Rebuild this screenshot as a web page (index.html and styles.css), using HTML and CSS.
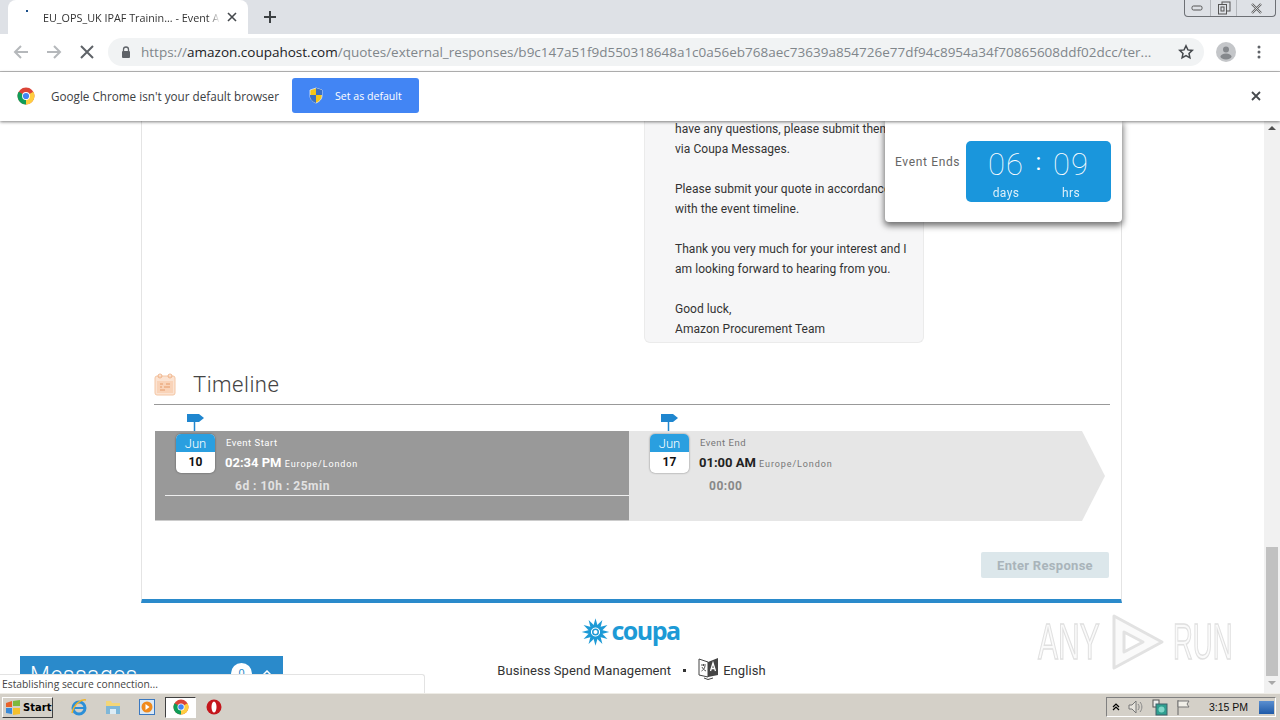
FILE: index.html
```html
<!DOCTYPE html>
<html>
  <head>
    <title>EU_OPS_UK IPAF Training - Event</title>
    <link rel="stylesheet" href="styles.css">
  </head>
  <body>
    <!-- browser chrome -->
    <div class="tabstrip">
      <div class="tab">
        <span class="tab-dot"></span>
        <span class="tab-title">EU_OPS_UK IPAF Trainin... - Event A</span>
        <svg class="tab-close" width="10" height="10" viewBox="0 0 10 10"><path d="M1 1l8 8M9 1l-8 8" stroke="#45494d" stroke-width="1.6"/></svg>
      </div>
      <svg class="new-tab" width="12" height="12" viewBox="0 0 12 12"><path d="M6 0v12M0 6h12" stroke="#3c4043" stroke-width="2"/></svg>
      <div class="window-btns">
        <span class="win-btn"><svg width="13" height="8" viewBox="0 0 13 8"><rect x="1" y="2" width="10" height="4" rx="1.5" fill="none" stroke="#555"/></svg></span>
        <span class="win-btn"><svg width="14" height="14" viewBox="0 0 14 14"><rect x="5" y="1" width="8" height="9" fill="none" stroke="#555"/><rect x="1.500" y="3.500" width="8" height="9.500" fill="#dee1e6" stroke="#555"/><rect x="4" y="6" width="3" height="4" fill="none" stroke="#555"/></svg></span>
        <span class="win-btn win-close"><svg width="13" height="11" viewBox="0 0 13 11"><path d="M2 1l9 9M11 1l-9 9" stroke="#666" stroke-width="2.400" fill="none"/><path d="M2 1l9 9M11 1l-9 9" stroke="#dee1e6" stroke-width=".8" fill="none"/></svg></span>
      </div>
    </div>

    <div class="toolbar">
      <svg class="tool-icon" width="16" height="16" viewBox="0 0 16 16"><path d="M15 8H2M8 2L2 8l6 6" fill="none" stroke="#b5b8bb" stroke-width="2"/></svg>
      <svg class="tool-icon" width="16" height="16" viewBox="0 0 16 16"><path d="M1 8h13M8 2l6 6-6 6" fill="none" stroke="#b5b8bb" stroke-width="2"/></svg>
      <svg class="tool-icon" width="16" height="16" viewBox="0 0 16 16"><path d="M2 2l12 12M14 2L2 14" stroke="#5f6368" stroke-width="2"/></svg>
      <div class="omnibox">
        <svg class="lock" width="10" height="12" viewBox="0 0 10 12"><path d="M2.500 5V3.500a2.500 2.500 0 0 1 5 0V5" fill="none" stroke="#5f6368" stroke-width="1.300"/><rect x="1" y="5" width="8" height="7" rx="1" fill="#5f6368"/></svg>
        <span class="url"><span class="url-scheme">https://</span><span class="url-host">amazon.coupahost.com</span>/quotes/external_responses/b9c147a51f9d550318648a1c0a56eb768aec73639a854726e77df94c8954a34f70865608ddf02dcc/ter...</span>
        <svg class="star" width="16" height="16" viewBox="0 0 16 16"><path d="M8 1.800l1.900 4.100 4.400.5-3.300 3 .9 4.400L8 11.600l-3.900 2.200.9-4.400-3.300-3 4.400-.5z" fill="none" stroke="#45494d" stroke-width="1.500"/></svg>
      </div>
      <svg class="avatar" width="20" height="20" viewBox="0 0 20 20"><circle cx="10" cy="10" r="10" fill="#c4c6c9"/><circle cx="10" cy="7.500" r="3" fill="#85888c"/><ellipse cx="10" cy="14.500" rx="5.500" ry="3" fill="#85888c"/></svg>
      <svg class="menu-dots" width="4" height="14" viewBox="0 0 4 14"><circle cx="2" cy="2" r="1.500" fill="#5f6368"/><circle cx="2" cy="7" r="1.500" fill="#5f6368"/><circle cx="2" cy="12" r="1.500" fill="#5f6368"/></svg>
    </div>

    <div class="infobar">
      <svg class="chrome-logo" width="18" height="18" viewBox="0 0 32 32"><circle cx="16" cy="16" r="15" fill="#db4437"/><path d="M16 16L3 8.500A15 15 0 0 0 16 31z" fill="#0f9d58"/><path d="M16 16l13-7.500A15 15 0 0 1 16 31z" fill="#ffcd40"/><circle cx="16" cy="16" r="7" fill="#fff"/><circle cx="16" cy="16" r="5.500" fill="#4285f4"/></svg>
      <span class="infobar-text">Google Chrome isn't your default browser</span>
      <button class="default-btn">
        <svg width="16" height="17" viewBox="0 0 16 17"><path d="M8 1l6 2v6c0 3-3 6-6 7-3-1-6-4-6-7V3z" fill="#f5c518" stroke="#dfe8f5" stroke-width=".8"/><path d="M8 1l6 2v5H8zM2 8h6v8C5 15 2 12 2 9z" fill="#3a6fc4"/></svg>
        Set as default
      </button>
      <svg class="infobar-close" width="10" height="10" viewBox="0 0 10 10"><path d="M1 1l8 8M9 1l-8 8" stroke="#45494d" stroke-width="1.800"/></svg>
    </div>

    <!-- page -->
    <div class="viewport">
      <div class="page">
        <div class="card">
          <div class="message">
            have any questions, please submit them<br>
            via Coupa Messages.<br>
            <br>
            Please submit your quote in accordance<br>
            with the event timeline.<br>
            <br>
            Thank you very much for your interest and I<br>
            am looking forward to hearing from you.<br>
            <br>
            Good luck,<br>
            Amazon Procurement Team
          </div>

          <div class="section-head">
            <svg width="22" height="23" viewBox="0 0 22 23"><rect x="1" y="3" width="20" height="19" rx="2" fill="#fbe3d2" stroke="#f4c6a4"/><rect x="3" y="8" width="16" height="12" fill="#f9d3b8"/><circle cx="6" cy="3" r="2" fill="none" stroke="#f0b48a"/><circle cx="16" cy="3" r="2" fill="none" stroke="#f0b48a"/><path d="M6 11h3M12 11h4M6 14h2M10 14h6M6 17h5" stroke="#e59a68"/></svg>
            <h2>Timeline</h2>
          </div>

          <div class="timeline">
            <div class="segment segment-past">
              <svg class="flag" width="17" height="19" viewBox="0 0 17 19"><path d="M0 2h12l5 4-5 4H0z" fill="#1f86cf"/><path d="M7.500 9v10" stroke="#1f86cf" stroke-width="1.500"/></svg>
              <div class="date-badge">
                <div class="date-month">Jun</div>
                <div class="date-day">10</div>
              </div>
              <div class="event-info">
                <div class="event-label">Event Start</div>
                <div class="event-time">02:34 PM <span class="event-zone">Europe/London</span></div>
                <div class="event-left">6d : 10h : 25min</div>
              </div>
              <div class="progress-line"></div>
            </div>
            <div class="segment segment-future">
              <svg class="flag" width="17" height="19" viewBox="0 0 17 19"><path d="M0 2h12l5 4-5 4H0z" fill="#1f86cf"/><path d="M7.500 9v10" stroke="#1f86cf" stroke-width="1.500"/></svg>
              <div class="date-badge">
                <div class="date-month">Jun</div>
                <div class="date-day">17</div>
              </div>
              <div class="event-info">
                <div class="event-label">Event End</div>
                <div class="event-time">01:00 AM <span class="event-zone">Europe/London</span></div>
                <div class="event-left">00:00</div>
              </div>
            </div>
          </div>

          <div class="actions">
            <button class="enter-btn">Enter Response</button>
          </div>
        </div>

        <div class="footer">
          <div class="coupa-logo">
            <svg width="29" height="28" viewBox="-14 -14 28 28">
              <circle r="3.500" fill="#1d9ad6"/>
              <g fill="#1d9ad6">
                <path d="M-2.600-4.500L0-13.800 2.600-4.500z"/>
                <path d="M-2.600-4.500L0-13.800 2.600-4.500z" transform="rotate(30)"/>
                <path d="M-2.600-4.500L0-13.800 2.600-4.500z" transform="rotate(60)"/>
                <path d="M-2.600-4.500L0-13.800 2.600-4.500z" transform="rotate(90)"/>
                <path d="M-2.600-4.500L0-13.800 2.600-4.500z" transform="rotate(120)"/>
                <path d="M-2.600-4.500L0-13.800 2.600-4.500z" transform="rotate(150)"/>
                <path d="M-2.600-4.500L0-13.800 2.600-4.500z" transform="rotate(180)"/>
                <path d="M-2.600-4.500L0-13.800 2.600-4.500z" transform="rotate(210)"/>
                <path d="M-2.600-4.500L0-13.800 2.600-4.500z" transform="rotate(240)"/>
                <path d="M-2.600-4.500L0-13.800 2.600-4.500z" transform="rotate(270)"/>
                <path d="M-2.600-4.500L0-13.800 2.600-4.500z" transform="rotate(300)"/>
                <path d="M-2.600-4.500L0-13.800 2.600-4.500z" transform="rotate(330)"/>
              </g>
              <circle r="2" fill="#fff"/>
            </svg>
            <span class="coupa-word">coupa</span>
          </div>
          <div class="footer-line">
            <span>Business Spend Management</span>
            <span class="footer-dot"></span>
            <svg width="21" height="24" viewBox="0 0 21 24"><path d="M1 3l9 3v15l-9-2z" fill="#fff" stroke="#444"/><path d="M10 6l10-4v17l-10 2z" fill="#444"/><path d="M3 9h5M5.500 8v2M7 10c-.5 3-2 4-3.500 5M4 11c1 2 2 3 4 4" fill="none" stroke="#444" stroke-width=".9"/><path d="M12.500 15l2.500-8 2.500 8M13.500 12.500h3" fill="none" stroke="#fff" stroke-width="1.300"/><path d="M6 22l4 1.500 5-1.500" fill="none" stroke="#444"/></svg>
            <span>English</span>
          </div>
        </div>
      </div>

      <div class="scrollbar">
        <svg width="16" height="17" viewBox="0 0 16 17"><path d="M4 9l4-4 4 4z" fill="#505050"/></svg>
        <div class="scroll-track"><div class="scroll-thumb"></div></div>
        <svg width="16" height="17" viewBox="0 0 16 17"><path d="M4 5l4 4 4-4z" fill="#a8a8a8"/></svg>
      </div>

      <!-- things floating over the page -->
      <div class="countdown">
        <span class="countdown-label">Event Ends</span>
        <div class="countdown-box">
          <div class="count-col"><span class="count-num">06</span><span class="count-unit">days</span></div>
          <div class="count-sep">:</div>
          <div class="count-col"><span class="count-num">09</span><span class="count-unit">hrs</span></div>
        </div>
      </div>

      <div class="messages-widget">
        <span class="messages-title">Messages</span>
        <span class="messages-count">0</span>
        <svg class="messages-arrow" width="10" height="6" viewBox="0 0 10 6"><path d="M1 5l4-4 4 4" fill="none" stroke="#fff" stroke-width="1.500"/></svg>
      </div>

      <div class="status-bubble">Establishing secure connection...</div>

      <div class="watermark">
        <span class="wm-any">ANY</span>
        <svg width="58" height="60" viewBox="0 0 58 60"><path d="M6 4l48 26L6 56z M16 20v20l19-10z" fill="#fafafa" stroke="#e2e2e2" stroke-width="3" stroke-linejoin="round"/></svg>
        <span class="wm-run">RUN</span>
      </div>
    </div>

    <!-- windows taskbar -->
    <div class="taskbar">
      <button class="start-btn">
        <svg width="16" height="15" viewBox="0 0 16 15"><path d="M1 3l6-2v6H1z" fill="#e8622a"/><path d="M8 1l7-1v6H8z" fill="#7cb83c"/><path d="M1 8h6v6l-6-1z" fill="#3a8ad8"/><path d="M8 8h7v6l-7 1z" fill="#f5c02c"/></svg>
        Start
      </button>
      <div class="quick-launch">
        <span class="task-item">
          <svg width="18" height="18" viewBox="0 0 18 18"><circle cx="9" cy="10" r="6" fill="none" stroke="#2b8fd8" stroke-width="3"/><path d="M4 10h10" stroke="#2b8fd8" stroke-width="2"/><path d="M2 15C4 6 11 1 16 2" fill="none" stroke="#f0b429" stroke-width="1.500"/></svg>
        </span>
        <span class="task-item">
          <svg width="16" height="16" viewBox="0 0 16 16"><path d="M1 2h5l1 2h8v11H1z" fill="#f3d679"/><path d="M1 7h14v8H1z" fill="#7fb7d8"/><path d="M5 15v-5h6v5" fill="#dcecf5"/></svg>
        </span>
        <span class="task-item">
          <svg width="16" height="16" viewBox="0 0 16 16"><rect x=".5" y=".5" width="15" height="15" fill="#dbe9f6" stroke="#3a78c0"/><circle cx="8" cy="8" r="5.500" fill="#f08a1c"/><path d="M6.500 5l4 3-4 3z" fill="#fff"/></svg>
        </span>
        <span class="task-item task-active">
          <svg width="16" height="16" viewBox="0 0 32 32"><circle cx="16" cy="16" r="15" fill="#db4437"/><path d="M16 16L3 8.500A15 15 0 0 0 16 31z" fill="#0f9d58"/><path d="M16 16l13-7.500A15 15 0 0 1 16 31z" fill="#ffcd40"/><circle cx="16" cy="16" r="7" fill="#fff"/><circle cx="16" cy="16" r="5.500" fill="#4285f4"/></svg>
        </span>
        <span class="task-item">
          <svg width="16" height="16" viewBox="0 0 16 16"><circle cx="8" cy="8" r="7.500" fill="#c4161c"/><ellipse cx="8" cy="8" rx="2.500" ry="5.500" fill="#fff"/></svg>
        </span>
      </div>
      <div class="tray">
        <svg width="8" height="8" viewBox="0 0 8 8"><path d="M1 4l3-3 3 3M1 7l3-3 3 3" fill="none" stroke="#000" stroke-width="1.200"/></svg>
        <svg width="16" height="16" viewBox="0 0 16 16"><path d="M1 6h3l4-4v12l-4-4H1z" fill="#e6e3dc" stroke="#777"/><path d="M10 5c1.500 2 1.500 4 0 6M12 3c2.500 3 2.500 7 0 10" fill="none" stroke="#888"/></svg>
        <svg width="16" height="17" viewBox="0 0 16 17"><rect x="1" y="1" width="6" height="7" fill="#eee" stroke="#555"/><rect x="4" y="5" width="11" height="11" fill="#2f9f90" stroke="#40606a"/><circle cx="9.500" cy="10.500" r="3" fill="#7fd6c8"/></svg>
        <svg width="15" height="16" viewBox="0 0 15 16"><path d="M2 1v15" stroke="#666"/><path d="M2 2h11l-2 3 2 3H2z" fill="#f1efe8" stroke="#777"/></svg>
        <span class="clock">3:15 PM</span>
        <span class="show-desktop"></span>
      </div>
    </div>
  </body>
</html>
```

FILE: styles.css
```css
html, body {
  margin: 0;
  padding: 0;
}

body {
  width: 1280px;
  height: 720px;
  overflow: hidden;
  display: flex;
  flex-direction: column;
  background-color: #fff;
  font-family: "Liberation Sans", Arial, sans-serif;
  color: #333;
}

/* tab strip */
.tabstrip {
  height: 34px;
  flex: none;
  display: flex;
  align-items: center;
  background-color: #dee1e6;
  position: relative;
}

.tab {
  width: 240px;
  height: 34px;
  margin-left: 8px;
  background-color: #fff;
  border-radius: 8px 8px 0 0;
  display: flex;
  align-items: center;
  box-sizing: border-box;
  position: relative;
}

.tab-dot {
  width: 2px;
  height: 2px;
  background-color: #1a4f8a;
  position: absolute;
  left: 18px;
  top: 10px;
}

.tab-title {
  margin-left: 35px;
  width: 177px;
  font-family: "Open Sans", sans-serif;
  font-size: 10.800px;
  white-space: nowrap;
  overflow: hidden;
  color: #333;
  -webkit-mask-image: linear-gradient(to right, #000 165px, transparent 177px);
  mask-image: linear-gradient(to right, #000 165px, transparent 177px);
}

.tab-close {
  margin-left: 7px;
}

.new-tab {
  margin-left: 16px;
}

.window-btns {
  position: absolute;
  left: 1184px;
  top: 0;
  width: 92px;
  height: 17px;
  box-sizing: border-box;
  border: 1px solid #6d7075;
  border-top: none;
  border-radius: 0 0 4px 4px;
  display: flex;
}

.win-btn {
  flex: 1;
  display: flex;
  align-items: center;
  justify-content: center;
  border-left: 1px solid #b4b7bc;
}

.win-btn:first-child {
  border-left: none;
}

.win-close {
  flex: 1.500;
}

/* toolbar */
.toolbar {
  height: 38px;
  flex: none;
  box-sizing: border-box;
  border-bottom: 1px solid #bdbdbd;
  background-color: #fff;
  display: flex;
  align-items: center;
  padding: 0 19px 1px 13px;
}

.tool-icon {
  margin-right: 17px;
}

.omnibox {
  width: 1096px;
  height: 28px;
  margin-left: -4px;
  border-radius: 14px;
  background-color: #f1f3f4;
  display: flex;
  align-items: center;
  padding: 0 10px 0 13px;
  box-sizing: border-box;
  flex: none;
}

.lock {
  flex: none;
}

.url {
  margin-left: 10px;
  width: 1020px;
  flex: none;
  font-family: "Open Sans", sans-serif;
  font-size: 13.500px;
  white-space: nowrap;
  overflow: hidden;
  color: #80868b;
}

.url-host {
  color: #202124;
}

.star {
  margin-left: 17px;
  flex: none;
}

.avatar {
  margin-left: 12px;
  flex: none;
}

.menu-dots {
  margin-left: 21px;
  flex: none;
}

/* infobar */
.infobar {
  height: 49px;
  flex: none;
  box-sizing: border-box;
  padding: 0 19px 2px 17px;
  display: flex;
  align-items: center;
  background-color: #fff;
  box-shadow: 0 1px 3px rgba(0, 0, 0, 0.5);
  position: relative;
  z-index: 5;
}

.infobar-text {
  margin-left: 16px;
  font-family: "Open Sans", sans-serif;
  font-size: 11.700px;
  color: #3c4043;
  width: 241px;
  white-space: nowrap;
}

.default-btn {
  width: 127px;
  height: 35px;
  border: none;
  border-radius: 3px;
  background-color: #4285f4;
  color: #fff;
  font-family: "Open Sans", sans-serif;
  font-size: 10.600px;
  display: flex;
  align-items: center;
  gap: 11px;
  padding: 0 0 0 16px;
}

.infobar-close {
  margin-left: auto;
}

/* page area */
.viewport {
  flex: 1;
  display: flex;
  position: relative;
  overflow: hidden;
}

.page {
  flex: 1;
  padding-left: 141px;
  overflow: hidden;
}

.card {
  width: 981px;
  height: 484px;
  box-sizing: border-box;
  border: 1px solid #e4e4e4;
  border-top: none;
  border-bottom: 4px solid #2a8acb;
  padding: 0 11px 0 12px;
}

.message {
  margin: -2px 0 0 490px;
  width: 280px;
  height: 224px;
  box-sizing: border-box;
  padding-left: 30px;
  border: 1px solid #ebebeb;
  border-top: none;
  border-radius: 0 0 6px 6px;
  background-color: #f6f6f7;
  font-family: Roboto, sans-serif;
  font-size: 12px;
  line-height: 20px;
  letter-spacing: 0.05px;
  white-space: nowrap;
  overflow: hidden;
  color: #333;
}

.section-head {
  margin-top: 30px;
  height: 31px;
  border-bottom: 1px solid #999;
  display: flex;
  align-items: flex-start;
  gap: 17px;
}

.section-head h2 {
  margin: 0;
  font-family: Roboto, sans-serif;
  font-weight: 300;
  font-size: 22px;
  line-height: 24px;
  letter-spacing: 0.5px;
  color: #444;
}

/* timeline */
.timeline {
  margin: 26px 0 0 1px;
  display: flex;
  height: 90px;
}

.segment {
  position: relative;
  box-sizing: border-box;
  height: 90px;
  display: flex;
  align-items: flex-start;
  padding: 3px 0 0 21px;
  gap: 11px;
}

.segment-past {
  width: 474px;
  background-color: #999;
  border-bottom: 1px solid #ccc;
}

/* body of the arrow, the point is the ::after triangle */
.segment-future {
  width: 453px;
  background-color: #e6e6e6;
}

.segment-future::after {
  content: "";
  position: absolute;
  left: 453px;
  top: 0;
  border-left: 23px solid #e6e6e6;
  border-top: 45px solid transparent;
  border-bottom: 45px solid transparent;
}

.flag {
  position: absolute;
  left: 32px;
  top: -19px;
}

.date-badge {
  width: 39px;
  height: 39px;
  flex: none;
  border-radius: 5px;
  overflow: hidden;
  background-color: #fff;
  box-shadow: 0 0 2px rgba(0, 0, 0, 0.5);
  text-align: center;
  font-family: Roboto, sans-serif;
}

.date-month {
  height: 18px;
  line-height: 19px;
  font-size: 13px;
  font-weight: 300;
  color: #fff;
  background-color: #2a9fe0;
}

.date-day {
  height: 21px;
  line-height: 20px;
  font-size: 12px;
  font-weight: bold;
  color: #111;
}

.event-info {
  margin-top: 3px;
}

.event-label {
  font-family: Roboto, sans-serif;
  font-size: 9.500px;
  line-height: 11px;
  letter-spacing: 0.5px;
  color: #fff;
}

.event-time {
  margin-top: 7px;
  margin-left: -1px;
  font-family: Roboto, sans-serif;
  font-weight: bold;
  font-size: 13px;
  line-height: 15px;
  color: #fff;
  white-space: nowrap;
}

.event-zone {
  font-weight: normal;
  font-size: 9px;
  letter-spacing: 0.9px;
}

.event-left {
  margin-top: 7px;
  margin-left: 9px;
  font-family: Roboto, sans-serif;
  font-weight: bold;
  font-size: 12px;
  line-height: 15px;
  letter-spacing: 0.5px;
  color: #e2e2e2;
}

.segment-future .event-label,
.segment-future .event-zone {
  color: #777;
}

.segment-future .event-time {
  color: #222;
}

.segment-future .event-left {
  color: #888;
}

.progress-line {
  position: absolute;
  left: 10px;
  right: 0;
  top: 64px;
  height: 1px;
  background-color: #eee;
}

.actions {
  margin-top: 31px;
  padding-right: 1px;
  text-align: right;
}

.enter-btn {
  width: 128px;
  height: 26px;
  border: none;
  border-radius: 2px;
  background-color: #dce7eb;
  color: #a9b4ba;
  font-family: Roboto, sans-serif;
  font-size: 13px;
  font-weight: bold;
  letter-spacing: 0.3px;
}

/* footer */
.footer {
  width: 981px;
  text-align: center;
  padding-top: 15px;
}

.coupa-logo {
  display: flex;
  justify-content: center;
  align-items: center;
  gap: 1px;
  height: 28px;
  margin-left: -2px;
}

.coupa-word {
  font-family: "Open Sans", sans-serif;
  font-weight: bold;
  font-size: 25px;
  line-height: 26px;
  letter-spacing: -1.500px;
  color: #1d9ad6;
  margin-top: -4px;
}

.footer-line {
  margin-top: 15px;
  display: flex;
  justify-content: center;
  align-items: center;
  font-family: Roboto, sans-serif;
  font-size: 13px;
  letter-spacing: 0.07px;
  color: #333;
}

.footer-dot {
  width: 3px;
  height: 3px;
  background-color: #333;
  margin: 0 12px 0 12px;
}

.footer-line svg {
  margin-right: 4px;
  margin-top: -5px;
}

/* scrollbar */
.scrollbar {
  width: 16px;
  flex: none;
  background-color: #f1f1f1;
  display: flex;
  flex-direction: column;
}

.scroll-track {
  flex: 1;
  display: flex;
  flex-direction: column;
  justify-content: flex-end;
  padding: 0 2px;
}

.scroll-thumb {
  height: 129px;
  background-color: #c1c1c1;
}

/* floating bits */
.countdown {
  position: absolute;
  left: 885px;
  top: 0;
  z-index: 3;
  width: 237px;
  height: 101px;
  box-sizing: border-box;
  padding: 20px 11px 0 10px;
  background-color: #fff;
  border-radius: 0 0 4px 4px;
  box-shadow: 0 3px 6px 1px rgba(0, 0, 0, 0.55);
  display: flex;
  justify-content: space-between;
}

.countdown-label {
  margin-top: 14px;
  font-family: Roboto, sans-serif;
  font-size: 12px;
  letter-spacing: 0.65px;
  color: #666;
}

.countdown-box {
  width: 145px;
  height: 61px;
  border-radius: 5px;
  background-color: #1a96dc;
  color: #fff;
  display: flex;
  justify-content: center;
  font-family: Roboto, sans-serif;
  padding-top: 4px;
  box-sizing: border-box;
}

.count-col {
  width: 50px;
  display: flex;
  flex-direction: column;
  align-items: center;
}

.count-num {
  font-weight: 100;
  font-size: 31px;
  line-height: 40px;
  letter-spacing: 1px;
}

.count-unit {
  font-size: 12px;
  line-height: 16px;
  letter-spacing: 0.4px;
  opacity: 0.85;
}

.count-sep {
  width: 15px;
  text-align: center;
  font-size: 24px;
  line-height: 34px;
}

.messages-widget {
  position: absolute;
  left: 20px;
  top: 535px;
  width: 263px;
  height: 40px;
  box-sizing: border-box;
  padding: 6px 10px 0 10px;
  background-color: #2a8acb;
  color: #fff;
  display: flex;
  align-items: flex-start;
  z-index: 2;
}

.messages-title {
  font-family: Roboto, sans-serif;
  font-weight: 300;
  font-size: 23px;
  letter-spacing: 0.5px;
  width: 201px;
}

.messages-count {
  width: 21px;
  height: 21px;
  border-radius: 50%;
  background-color: #fff;
  color: #2a8acb;
  font-size: 11px;
  text-align: center;
  line-height: 21px;
  margin: 1px 10px 0 0;
  flex: none;
}

.messages-arrow {
  margin-top: 8px;
}

.status-bubble {
  position: absolute;
  left: 0;
  top: 553px;
  width: 425px;
  height: 19px;
  box-sizing: border-box;
  padding: 0 2px;
  background-color: #fff;
  border: 1px solid #e3e3e3;
  border-left: none;
  border-bottom: none;
  border-radius: 0 3px 0 0;
  font-family: "Open Sans", sans-serif;
  font-size: 10.300px;
  line-height: 18px;
  color: #444;
  z-index: 4;
}

.watermark {
  position: absolute;
  left: 1038px;
  top: 491px;
  height: 60px;
  display: flex;
  align-items: center;
  font-family: "Liberation Sans", sans-serif;
  font-size: 50px;
  color: #fafafa;
  -webkit-text-stroke: 1.500px #e0e0e0;
}

.wm-any,
.wm-run {
  display: block;
  transform-origin: left center;
  white-space: nowrap;
}

.wm-any {
  width: 70px;
  transform: scaleX(0.6);
}

.wm-run {
  width: 60px;
  margin-left: 7px;
  transform: scaleX(0.55);
}

/* taskbar */
.taskbar {
  height: 27px;
  flex: none;
  box-sizing: border-box;
  border-top: 1px solid #eeece6;
  background-color: #d4d0c8;
  display: flex;
  align-items: center;
  padding: 0 4px 0 2px;
  position: relative;
  z-index: 6;
}

.start-btn {
  width: 51px;
  height: 21px;
  box-sizing: border-box;
  padding: 0 0 0 2px;
  display: flex;
  align-items: center;
  gap: 2px;
  background-color: #d4d0c8;
  border: 1px solid;
  border-color: #fff #404040 #404040 #fff;
  font-family: "DejaVu Sans", sans-serif;
  font-size: 10px;
  font-weight: bold;
  color: #000;
}

.quick-launch {
  margin-left: 9px;
  display: flex;
  align-items: center;
}

.task-item {
  width: 34px;
  height: 21px;
  display: flex;
  align-items: center;
  justify-content: center;
}

.task-active {
  width: 31px;
  margin: 0 1px;
  background-color: #fff;
  box-sizing: border-box;
  border: 1px solid;
  border-color: #404040 #fff #fff #404040;
}

.tray {
  margin-left: auto;
  width: 170px;
  height: 20px;
  box-sizing: border-box;
  border: 1px solid;
  border-color: #808080 #fff #fff #808080;
  display: flex;
  align-items: center;
  padding-left: 5px;
  gap: 8px;
}

.clock {
  margin-left: 10px;
  font-family: "Liberation Sans", sans-serif;
  font-size: 10.500px;
  color: #111;
  white-space: nowrap;
}

.show-desktop {
  width: 15px;
  height: 13px;
  margin-left: 3px;
  background: linear-gradient(#5b8fd0, #1f5aa8);
}
```
